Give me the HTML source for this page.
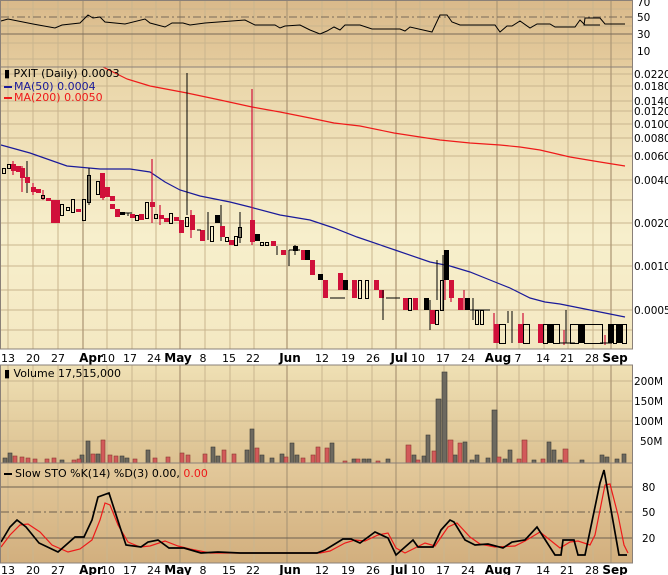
<!DOCTYPE html><html><head><meta charset="utf-8"><style>
body{margin:0;background:#fff;width:668px;height:575px;overflow:hidden}
svg{display:block;font-family:"DejaVu Sans","Liberation Sans",sans-serif}
.r{fill:#d0103a}.k{fill:#000}.h{fill:none;stroke:#000;stroke-width:1}
.g{stroke:#c9b58e;stroke-width:1}
.ax{font-size:10.5px;fill:#000}
.dl{font-size:11px;fill:#000}
.db{font-size:12px;font-weight:bold;fill:#000}
</style></head><body>
<svg width="668" height="575" viewBox="0 0 668 575">
<defs>
<linearGradient id="gR" x1="0" y1="0" x2="0" y2="1"><stop offset="0" stop-color="#d9b98a"/><stop offset="1" stop-color="#e5cc9e"/></linearGradient>
<linearGradient id="gP" x1="0" y1="0" x2="0" y2="1"><stop offset="0" stop-color="#e9d4a7"/><stop offset="0.6" stop-color="#f7efcc"/><stop offset="1" stop-color="#f4e8c2"/></linearGradient>
<linearGradient id="gV" x1="0" y1="0" x2="0" y2="1"><stop offset="0" stop-color="#efe0b4"/><stop offset="1" stop-color="#dcc191"/></linearGradient>
<linearGradient id="gS" x1="0" y1="0" x2="0" y2="1"><stop offset="0" stop-color="#e3c99b"/><stop offset="1" stop-color="#d2af7e"/></linearGradient>
</defs>
<rect x="1" y="0" width="631" height="67" fill="url(#gR)"/>
<rect x="1" y="67" width="631" height="282" fill="url(#gP)"/>
<rect x="1" y="365" width="631" height="98" fill="url(#gV)"/>
<rect x="1" y="463" width="631" height="100" fill="url(#gS)"/>
<g class="g">
<path d="M8 0V349M33 0V349M58 0V349M107 0V349M132 0V349M156 0V349M205 0V349M230 0V349M254 0V349M322 0V349M347 0V349M372 0V349M420 0V349M444 0V349M469 0V349M519 0V349M544 0V349M568 0V349M593 0V349"/>
<path d="M8 365V563M33 365V563M58 365V563M107 365V563M132 365V563M156 365V563M205 365V563M230 365V563M254 365V563M322 365V563M347 365V563M372 365V563M420 365V563M444 365V563M469 365V563M519 365V563M544 365V563M568 365V563M593 365V563"/>
<path d="M1 74H632M1 86H632M1 101H632M1 111H632M1 124H632M1 138H632M1 156H632M1 180H632M1 223H632M1 266H632M1 310H632M1 200H632M1 245H632M1 290H632M1 330H632"/>
<path d="M1 9H632M1 26H632M1 43H632M1 59H632"/>
<path d="M1 381H632M1 401H632M1 421H632M1 441H632"/>
</g>
<g stroke="#b09a78" stroke-width="1.3">
<path d="M83 0V349M180 0V349M287 0V349M396 0V349M497 0V349M611 0V349"/>
<path d="M83 365V563M180 365V563M287 365V563M396 365V563M497 365V563M611 365V563"/>
</g>
<path d="M1 17H632" stroke="#7a6a58" stroke-dasharray="8,3,2,3"/>
<path d="M1 34H632" stroke="#7a6a58"/>
<polyline fill="none" stroke="#000" stroke-width="1" points="1,21 8,19 33,24 55,28 62,25 80,23 88,15 93,18 100,17 105,22 125,24 145,19 150,23 165,27 172,23 183,23 190,25 205,23 245,20 255,25 275,25 280,28 285,26 300,25 310,30 320,34 327,31 334,27 340,30 345,25 360,25 372,29 400,29 405,31 410,27 432,32 440,15 447,15 452,22 460,25 495,25 500,32 507,26 512,26 520,21 530,28 537,24 550,24 555,27 575,27 580,20 585,25 600,25 584,25 585,18 600,18 605,24 625,24"/>
<polyline fill="none" stroke="#ee1a1a" stroke-width="1.2" points="103,67 127,79 150,86 187,93 220,100 252,107 280,112 310,118 334,123 360,126 394,133 420,137 440,140 470,143 500,145 520,147 540,150 570,157 600,162 625,166"/>
<polyline fill="none" stroke="#1a1a9a" stroke-width="1.2" points="1,145 30,153 67,166 100,169 130,169 150,172 165,182 180,190 200,196 230,202 250,207 280,215 310,220 334,228 357,237 395,250 430,262 450,266 470,272 490,280 510,288 530,298 545,302 560,304 575,307 590,310 610,314 625,317"/>
<g stroke="#000" stroke-width="1">
<path d="M27 161V193M89 168V205M187 73V215M208 212V240M221 205V241M240 212V243M277 246V255M289 250V266M295 245V255M437 260V300M443 255V310M512 311V343M508 311V323M566 310V343M430 300V330M473 298V320"/>
</g>
<g stroke="#d0103a" stroke-width="1.2">
<path d="M152 159V223M252 89V245M13 161V175M22 166V192M33 183V195M43 190V200M55 200V223M103 180V200M160 205V225M191 210V238M325 280V298M355 290V298M445 270V300M451 280V302M464 290V310M494 313V343M523 313V343M564 330V345M605 335V345"/>
</g>
<g class="r">
<rect x="11" y="164" width="5" height="7"/><rect x="16" y="166" width="5" height="6"/><rect x="20" y="168" width="5" height="10"/><rect x="25" y="177" width="5" height="6"/><rect x="31" y="187" width="5" height="5"/><rect x="36" y="189" width="5" height="4"/><rect x="46" y="198" width="5" height="3"/><rect x="51" y="200" width="9" height="23"/><rect x="76" y="209" width="5" height="3"/><rect x="100" y="173" width="5" height="25"/><rect x="105" y="187" width="5" height="10"/><rect x="110" y="196" width="5" height="5"/><rect x="110" y="204" width="5" height="5"/><rect x="115" y="209" width="5" height="8"/><rect x="130" y="214" width="5" height="4"/><rect x="139" y="214" width="5" height="6"/><rect x="150" y="202" width="5" height="5"/><rect x="159" y="215" width="5" height="4"/><rect x="164" y="218" width="5" height="4"/><rect x="174" y="217" width="5" height="4"/><rect x="179" y="220" width="5" height="13"/><rect x="190" y="215" width="5" height="15"/><rect x="200" y="230" width="5" height="11"/><rect x="220" y="226" width="5" height="11"/><rect x="229" y="240" width="5" height="5"/><rect x="250" y="220" width="5" height="22"/><rect x="271" y="241" width="5" height="5"/><rect x="281" y="250" width="5" height="5"/><rect x="301" y="250" width="5" height="10"/><rect x="310" y="260" width="5" height="15"/><rect x="323" y="280" width="5" height="18"/><rect x="338" y="273" width="5" height="17"/><rect x="352" y="280" width="5" height="18"/><rect x="374" y="280" width="5" height="10"/><rect x="379" y="290" width="5" height="8"/><rect x="403" y="298" width="5" height="12"/><rect x="413" y="298" width="5" height="12"/><rect x="430" y="310" width="5" height="14"/><rect x="449" y="280" width="5" height="18"/><rect x="458" y="298" width="5" height="12"/><rect x="494" y="324" width="5" height="19"/><rect x="518" y="324" width="5" height="19"/><rect x="538" y="324" width="5" height="19"/>
</g>
<g class="k">
<rect x="120" y="212" width="5" height="3"/><rect x="215" y="215" width="5" height="8"/><rect x="255" y="234" width="5" height="7"/><rect x="293" y="246" width="5" height="5"/><rect x="305" y="250" width="5" height="10"/><rect x="318" y="274" width="5" height="6"/><rect x="343" y="280" width="5" height="10"/><rect x="424" y="298" width="5" height="12"/><rect x="444" y="250" width="5" height="30"/><rect x="465" y="298" width="5" height="12"/><rect x="548" y="324" width="5" height="19"/><rect x="579" y="324" width="5" height="19"/><rect x="608" y="324" width="5" height="19"/><rect x="617" y="324" width="5" height="19"/>
</g>
<g class="h">
<rect x="2.5" y="168.5" width="3" height="5"/><rect x="7.5" y="164.5" width="3" height="4"/><rect x="41.5" y="195.5" width="3" height="3"/><rect x="60.5" y="204.5" width="3" height="11"/><rect x="66.5" y="207.5" width="3" height="3"/><rect x="71.5" y="199.5" width="3" height="13"/><rect x="82.5" y="199.5" width="3" height="21"/><rect x="87.5" y="175.5" width="3" height="27"/><rect x="96.5" y="181.5" width="3" height="13"/><rect x="135.5" y="215.5" width="3" height="5"/><rect x="145.5" y="202.5" width="3" height="16"/><rect x="154.5" y="214.5" width="3" height="4"/><rect x="169.5" y="213.5" width="3" height="10"/><rect x="185.5" y="217.5" width="3" height="9"/><rect x="210.5" y="226.5" width="3" height="15"/><rect x="225.5" y="237.5" width="3" height="4"/><rect x="234.5" y="236.5" width="3" height="9"/><rect x="238.5" y="227.5" width="3" height="10"/><rect x="260.5" y="242.5" width="3" height="3"/><rect x="265.5" y="242.5" width="3" height="3"/><rect x="358.5" y="280.5" width="3" height="18"/><rect x="365.5" y="280.5" width="3" height="18"/><rect x="408.5" y="298.5" width="3" height="12"/><rect x="435.5" y="310.5" width="3" height="14"/><rect x="440.5" y="280.5" width="3" height="30"/><rect x="475.5" y="310.5" width="3" height="14"/><rect x="480.5" y="310.5" width="3" height="14"/><rect x="499.5" y="324.5" width="6" height="19"/><rect x="523.5" y="324.5" width="6" height="19"/><rect x="543.5" y="324.5" width="4" height="19"/><rect x="553.5" y="324.5" width="6" height="19"/><rect x="570.5" y="324.5" width="8" height="19"/><rect x="584.5" y="324.5" width="18" height="19"/><rect x="613.5" y="324.5" width="3" height="19"/><rect x="622.5" y="324.5" width="4" height="19"/>
</g>
<path d="M125 213H132M128 213V216M197 230H201M289 250H300M330 298H345M386 298H400M383 290V320M470 310H490M560 343H575M600 343H612" stroke="#000" fill="none"/>
<g fill="#6d695f" stroke="#3a3a36" stroke-width="0.6">
<rect x="3" y="458" width="4" height="5"/><rect x="8" y="453" width="4" height="10"/><rect x="60" y="460" width="4" height="3"/><rect x="80" y="455" width="4" height="8"/><rect x="86" y="441" width="4" height="22"/><rect x="96" y="454" width="4" height="9"/><rect x="120" y="456" width="4" height="7"/><rect x="125" y="458" width="4" height="5"/><rect x="146" y="450" width="4" height="13"/><rect x="211" y="447" width="4" height="16"/><rect x="216" y="456" width="4" height="7"/><rect x="245" y="450" width="4" height="13"/><rect x="250" y="429" width="4" height="34"/><rect x="260" y="455" width="4" height="8"/><rect x="270" y="458" width="4" height="5"/><rect x="280" y="454" width="4" height="9"/><rect x="290" y="443" width="4" height="20"/><rect x="295" y="455" width="4" height="8"/><rect x="330" y="443" width="4" height="20"/><rect x="352" y="459" width="4" height="4"/><rect x="362" y="459" width="4" height="4"/><rect x="367" y="459" width="4" height="4"/><rect x="386" y="459" width="4" height="4"/><rect x="412" y="455" width="4" height="8"/><rect x="422" y="456" width="4" height="7"/><rect x="426" y="435" width="4" height="28"/><rect x="436" y="399" width="5" height="64"/><rect x="442" y="372" width="5" height="91"/><rect x="453" y="455" width="4" height="8"/><rect x="463" y="442" width="4" height="21"/><rect x="470" y="460" width="4" height="3"/><rect x="475" y="455" width="4" height="8"/><rect x="486" y="458" width="4" height="5"/><rect x="492" y="410" width="5" height="53"/><rect x="503" y="459" width="4" height="4"/><rect x="508" y="450" width="4" height="13"/><rect x="532" y="460" width="4" height="3"/><rect x="547" y="442" width="4" height="21"/><rect x="552" y="450" width="4" height="13"/><rect x="558" y="460" width="4" height="3"/><rect x="580" y="460" width="4" height="3"/><rect x="600" y="455" width="4" height="8"/><rect x="605" y="457" width="4" height="6"/><rect x="615" y="459" width="4" height="4"/><rect x="622" y="454" width="4" height="9"/>
</g>
<g fill="#d25a5a" stroke="#8a3a30" stroke-width="0.6">
<rect x="13" y="456" width="4" height="7"/><rect x="20" y="457" width="4" height="6"/><rect x="26" y="458" width="4" height="5"/><rect x="33" y="459" width="4" height="4"/><rect x="45" y="459" width="4" height="4"/><rect x="52" y="458" width="4" height="5"/><rect x="72" y="460" width="4" height="3"/><rect x="77" y="459" width="4" height="4"/><rect x="91" y="454" width="4" height="9"/><rect x="101" y="440" width="4" height="23"/><rect x="108" y="455" width="4" height="8"/><rect x="114" y="456" width="4" height="7"/><rect x="133" y="459" width="4" height="4"/><rect x="153" y="458" width="4" height="5"/><rect x="166" y="457" width="4" height="6"/><rect x="180" y="453" width="4" height="10"/><rect x="186" y="455" width="4" height="8"/><rect x="203" y="454" width="4" height="9"/><rect x="222" y="450" width="4" height="13"/><rect x="232" y="454" width="4" height="9"/><rect x="255" y="448" width="4" height="15"/><rect x="284" y="457" width="4" height="6"/><rect x="301" y="458" width="4" height="5"/><rect x="311" y="455" width="4" height="8"/><rect x="316" y="447" width="4" height="16"/><rect x="325" y="448" width="4" height="15"/><rect x="343" y="461" width="4" height="2"/><rect x="356" y="459" width="4" height="4"/><rect x="376" y="461" width="4" height="2"/><rect x="406" y="445" width="5" height="18"/><rect x="416" y="460" width="4" height="3"/><rect x="432" y="451" width="4" height="12"/><rect x="448" y="440" width="5" height="23"/><rect x="458" y="443" width="4" height="20"/><rect x="497" y="457" width="4" height="6"/><rect x="517" y="459" width="4" height="4"/><rect x="522" y="440" width="5" height="23"/><rect x="541" y="459" width="4" height="4"/><rect x="563" y="449" width="5" height="14"/>
</g>
<path d="M1 487H632M1 538H632" stroke="#6e6050"/>
<path d="M1 512H632" stroke="#6e6050" stroke-dasharray="8,3,2,3"/>
<polyline fill="none" stroke="#ee1a1a" stroke-width="1.2" points="1,547 10,535 20,525 28,524 40,532 52,545 68,552 80,549 92,540 100,520 105,503 110,505 118,525 128,542 140,547 150,546 165,541 178,546 190,549 210,553 240,553 320,553 330,551 345,543 355,540 365,541 378,535 388,533 396,548 405,553 415,548 425,543 435,546 448,527 457,523 470,537 480,544 495,547 515,546 525,541 540,532 550,540 560,548 570,542 578,541 590,545 595,535 605,485 610,484 618,515 624,545 628,553"/>
<polyline fill="none" stroke="#000" stroke-width="1.7" points="1,542 10,527 17,520 26,527 39,543 58,552 75,537 84,537 92,520 98,497 109,493 120,527 126,545 141,547 148,542 158,540 169,548 184,548 201,553 218,552 240,553 317,553 325,550 343,539 351,539 360,543 375,532 388,538 396,555 405,547 413,540 418,547 433,547 441,530 450,520 454,522 465,540 475,545 488,544 503,548 512,542 525,540 537,527 555,555 561,555 563,540 574,540 578,555 585,555 600,483 604,470 619,555 627,555"/>
<g fill="none" stroke="#8a8078" stroke-width="1">
<rect x="0.5" y="0.5" width="632" height="66.5"/>
<rect x="0.5" y="67" width="632" height="282"/>
<rect x="0.5" y="365" width="632" height="198"/>
<path d="M1 463H632"/>
</g>
<g font-size="11">
<text x="4" y="77" fill="#000">▮ PXIT (Daily) 0.0003</text>
<rect x="4" y="86" width="8" height="2" fill="#1a1a9a"/><text x="14" y="90" fill="#1a1a9a">MA(50) 0.0004</text>
<rect x="4" y="97" width="8" height="2" fill="#ee1a1a"/><text x="14" y="101" fill="#ee1a1a">MA(200) 0.0050</text>
<text x="4" y="377" fill="#000">▮ Volume 17,515,000</text>
<rect x="4" y="473" width="8" height="2" fill="#000"/><text x="15" y="477" fill="#000">Slow STO %K(14) %D(3) 0.00, <tspan fill="#ee1a1a">0.00</tspan></text>
</g>
<g class="ax">
<text x="637" y="6">70</text><text x="637" y="21">50</text><text x="637" y="38">30</text><text x="637" y="55">10</text>
<text x="634" y="78">0.0220</text><text x="634" y="90">0.0180</text><text x="634" y="105">0.0140</text><text x="634" y="115">0.0120</text><text x="634" y="128">0.0100</text><text x="634" y="142">0.0080</text><text x="634" y="160">0.0060</text><text x="634" y="184">0.0040</text><text x="634" y="227">0.0020</text><text x="634" y="270">0.0010</text><text x="634" y="314">0.0005</text>
<text x="634" y="385">200M</text><text x="634" y="405">150M</text><text x="634" y="425">100M</text><text x="640" y="445">50M</text>
<text x="642" y="491">80</text><text x="642" y="516">50</text><text x="642" y="542">20</text>
</g>
<g class="dl" text-anchor="middle">
<text x="8" y="362">13</text><text x="33" y="362">20</text><text x="58" y="362">27</text><text x="108" y="362">10</text><text x="130" y="362">17</text><text x="154" y="362">24</text><text x="203" y="362">8</text><text x="229" y="362">15</text><text x="253" y="362">22</text><text x="322" y="362">12</text><text x="348" y="362">19</text><text x="373" y="362">26</text><text x="418" y="362">10</text><text x="443" y="362">17</text><text x="468" y="362">24</text><text x="518" y="362">7</text><text x="543" y="362">14</text><text x="567" y="362">21</text><text x="592" y="362">28</text>
<text x="8" y="574">13</text><text x="33" y="574">20</text><text x="58" y="574">27</text><text x="108" y="574">10</text><text x="130" y="574">17</text><text x="154" y="574">24</text><text x="203" y="574">8</text><text x="229" y="574">15</text><text x="253" y="574">22</text><text x="322" y="574">12</text><text x="348" y="574">19</text><text x="373" y="574">26</text><text x="418" y="574">10</text><text x="443" y="574">17</text><text x="468" y="574">24</text><text x="518" y="574">7</text><text x="543" y="574">14</text><text x="567" y="574">21</text><text x="592" y="574">28</text>
</g>
<g class="db" text-anchor="middle">
<text x="91" y="362">Apr</text><text x="178" y="362">May</text><text x="290" y="362">Jun</text><text x="399" y="362">Jul</text><text x="498" y="362">Aug</text><text x="615" y="362">Sep</text>
<text x="91" y="574">Apr</text><text x="178" y="574">May</text><text x="290" y="574">Jun</text><text x="399" y="574">Jul</text><text x="498" y="574">Aug</text><text x="615" y="574">Sep</text>
</g>
</svg>
</body></html>
